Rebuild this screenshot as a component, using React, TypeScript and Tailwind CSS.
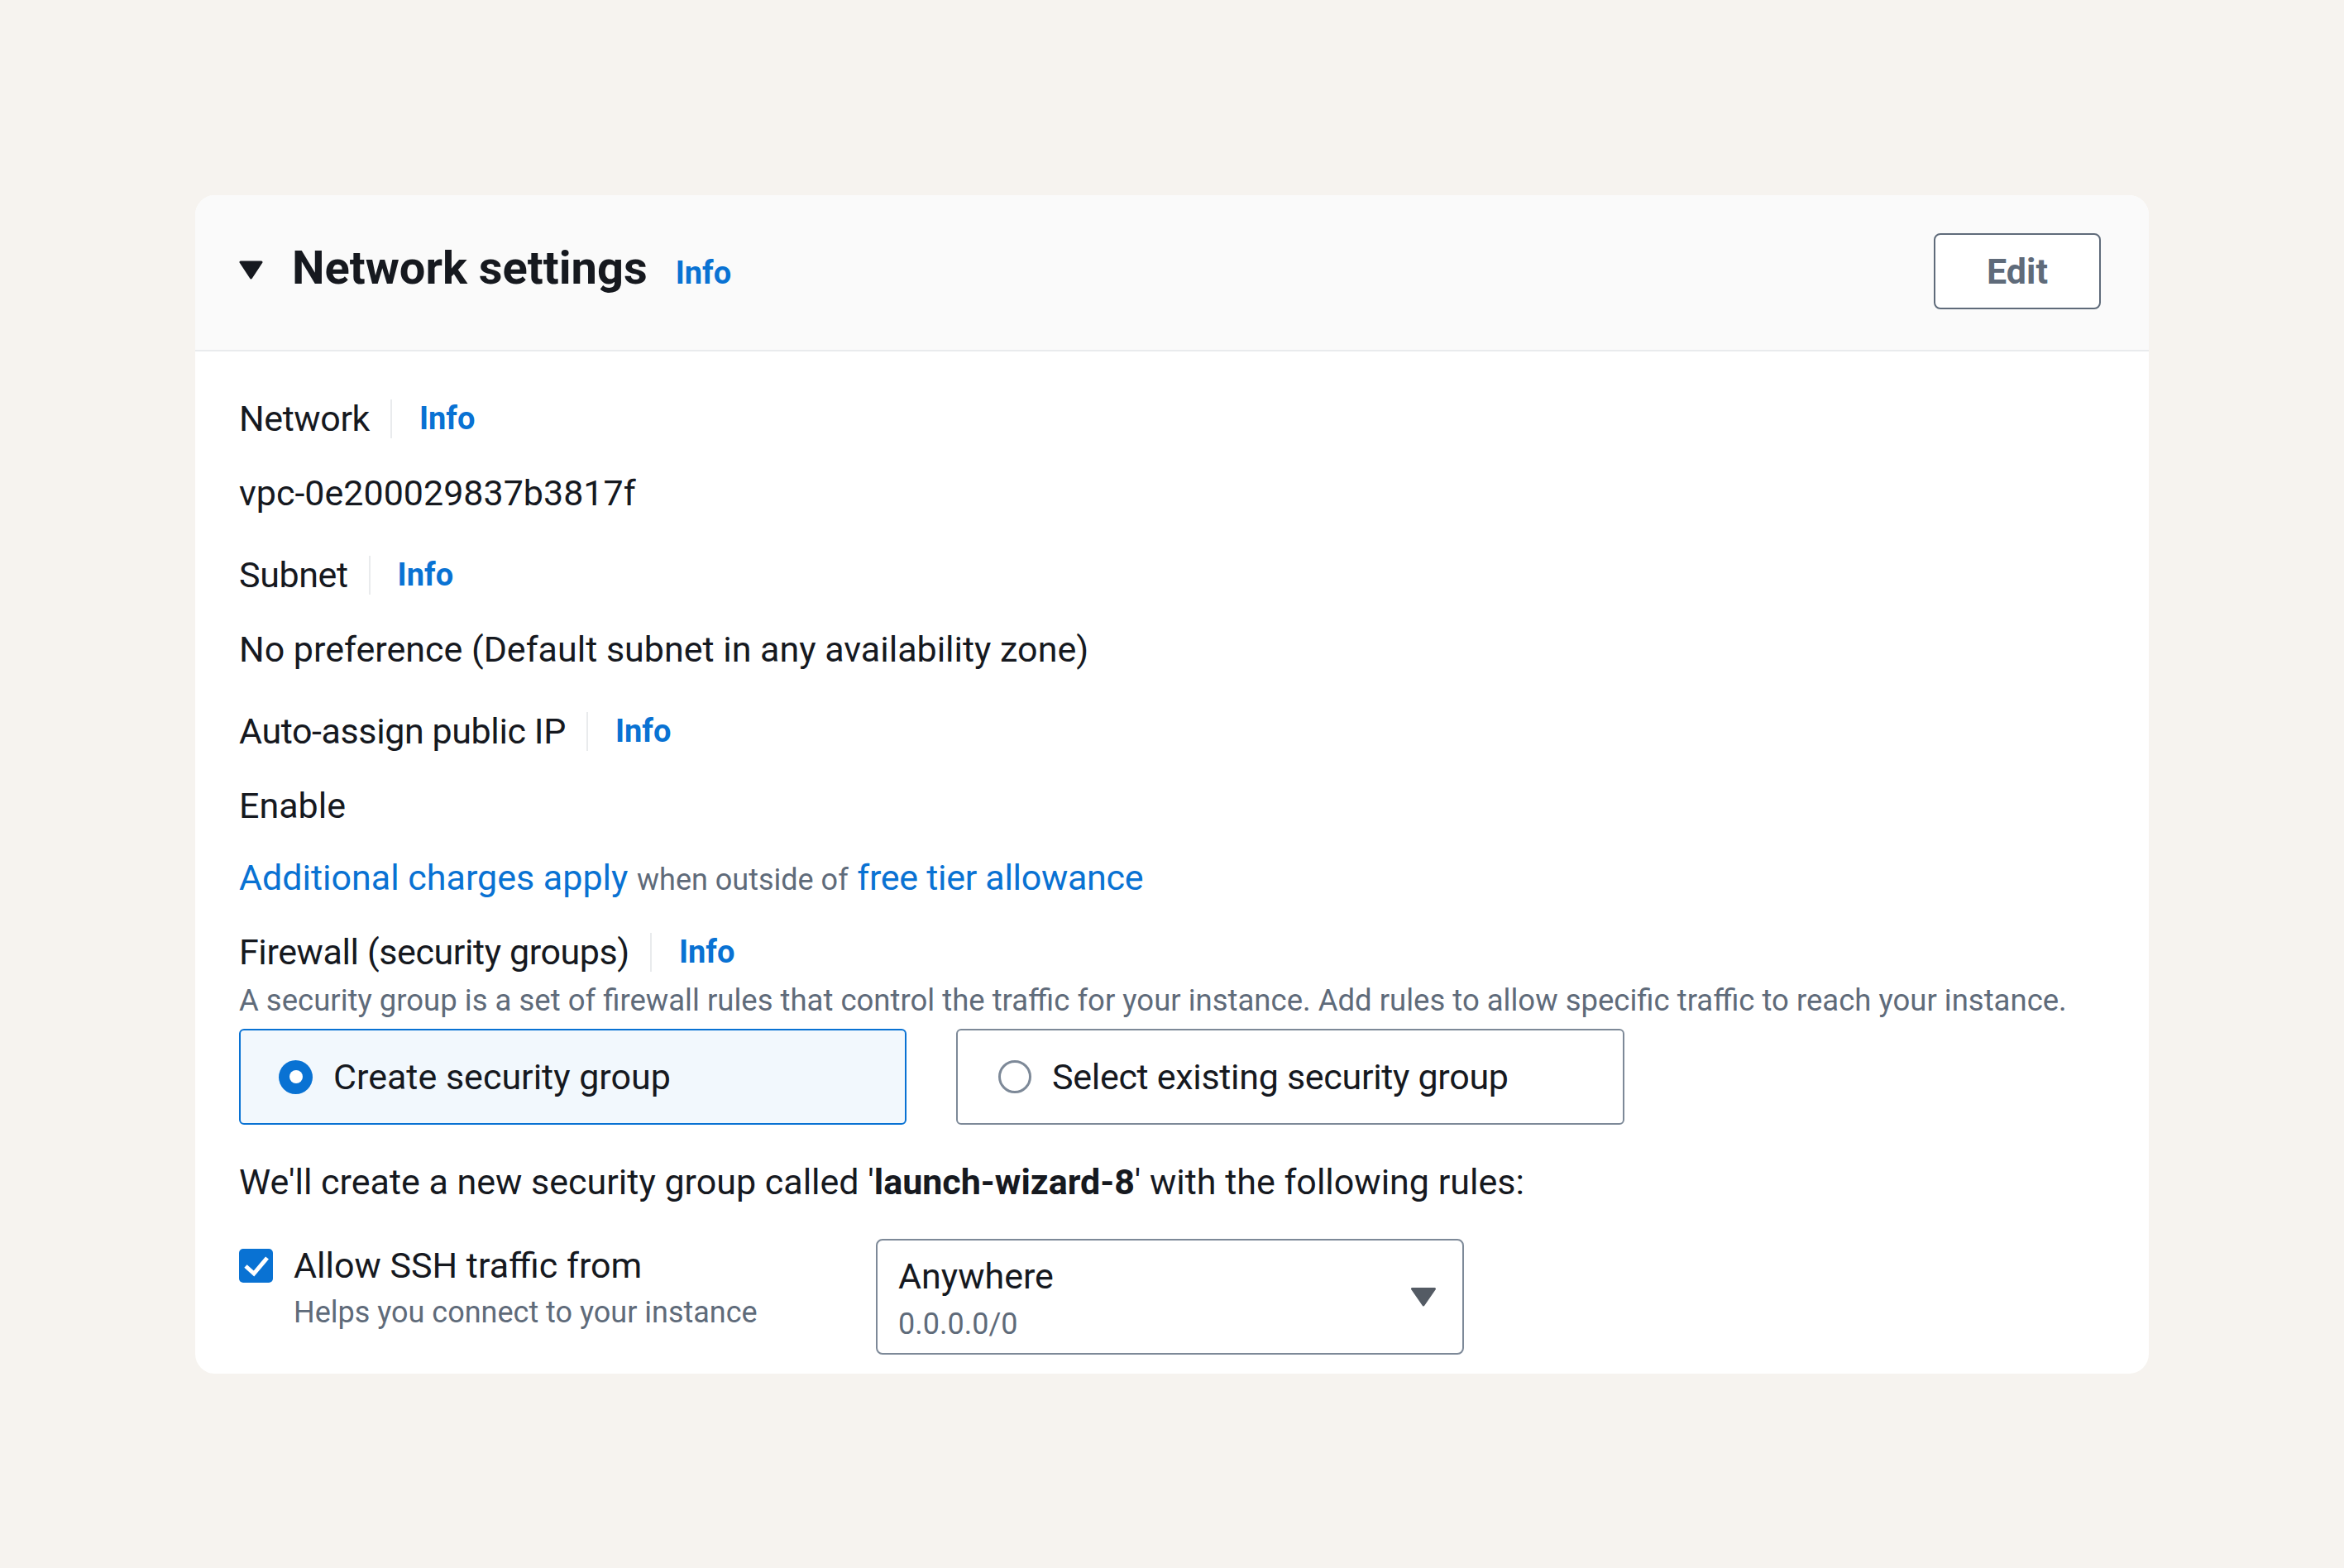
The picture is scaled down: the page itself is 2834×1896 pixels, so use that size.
import React from 'react';

function Info({ className = '' }: { className?: string }) {
  return <span className={`text-[38px] font-bold text-[#0972d3] ${className}`}>Info</span>;
}

function LabelRow({ label, className = '' }: { label: string; className?: string }) {
  return (
    <div className={`flex h-[47px] items-stretch ${className}`}>
      <span className="text-[43px] leading-[47px] tracking-[-0.4px] pr-[25px] border-r-2 border-[#e9ebed]">{label}</span>
      <Info className="pl-[33px] leading-[47px]" />
    </div>
  );
}

function Value({ children, className = '' }: { children: React.ReactNode; className?: string }) {
  return <div className={`h-[47px] text-[43px] leading-[47px] whitespace-nowrap ${className}`}>{children}</div>;
}

export default function App() {
  return (
    <div className="w-[2834px] h-[1896px] bg-[#f6f3ef] pl-[236px] pt-[236px] font-['Roboto',sans-serif] text-[#16191f]">
      <div className="w-[2362px] bg-white rounded-[24px] overflow-hidden">
        {/* header */}
        <div className="h-[189px] bg-[#fafafa] border-b-2 border-[#e9ebed] pl-[53px] pr-[58px] flex items-start justify-between">
          <div className="mt-[60px] h-[60px] flex items-center">
            <svg width="29" height="23" viewBox="0 0 29 23" className="mr-[35px]">
              <path d="M2 2 H27 L14.5 21 Z" fill="#16191f" stroke="#16191f" strokeWidth="3" strokeLinejoin="round" />
            </svg>
            <div className="flex items-baseline">
              <h2 className="text-[56px] leading-[60px] font-bold">Network settings</h2>
              <Info className="ml-[34px]" />
            </div>
          </div>
          <button className="mt-[46px] w-[202px] h-[92px] bg-white border-2 border-[#5f6b7a] rounded-[8px] text-[43px] font-bold text-[#5f6b7a]">
            Edit
          </button>
        </div>

        {/* body */}
        <div className="pl-[53px] pr-[58px] pt-[58px] pb-[23px]">
          <LabelRow label="Network" />
          <Value className="mt-[43px]">vpc-0e200029837b3817f</Value>
          <LabelRow label="Subnet" className="mt-[52px]" />
          <Value className="mt-[43px]">No preference (Default subnet in any availability zone)</Value>
          <LabelRow label="Auto-assign public IP" className="mt-[52px]" />
          <Value className="mt-[43px]">Enable</Value>
          <Value className="mt-[40px]">
            <span className="text-[#0972d3]">Additional charges apply</span>{' '}
            <span className="text-[36px] text-[#5f6b7a]">when outside of</span>{' '}
            <span className="text-[#0972d3] tracking-[-0.3px]">free tier allowance</span>
          </Value>
          <LabelRow label="Firewall (security groups)" className="mt-[43px]" />
          <p className="mt-[13px] text-[36.5px] leading-[44px] text-[#5f6b7a] whitespace-nowrap">
            A security group is a set of firewall rules that control the traffic for your instance. Add rules to allow specific traffic to reach your instance.
          </p>

          <div className="mt-[12px] flex gap-[60px]">
            <div className="w-[807px] h-[116px] border-2 border-[#0972d3] bg-[#f2f8fd] rounded-[6px] pl-[46px] flex items-center gap-[25px]">
              <div className="w-[41px] h-[41px] rounded-full bg-[#0972d3] flex items-center justify-center">
                <div className="w-[16px] h-[16px] rounded-full bg-white" />
              </div>
              <span className="text-[43px] leading-[47px]">Create security group</span>
            </div>
            <div className="w-[808px] h-[116px] border-2 border-[#7d8998] bg-white rounded-[6px] pl-[49px] flex items-center gap-[25px]">
              <div className="w-[40px] h-[40px] rounded-full border-[3px] border-[#7d8998] bg-white" />
              <span className="text-[43px] leading-[47px] tracking-[-0.3px]">Select existing security group</span>
            </div>
          </div>

          <Value className="mt-[46px]">
            We'll create a new security group called '<span className="font-bold">launch-wizard-8</span>' with the following rules:
          </Value>

          <div className="mt-[45px] flex items-start">
            <div className="w-[770px] flex items-start">
              <div className="mt-[12px] w-[41px] h-[41px] rounded-[5px] bg-[#0972d3] flex items-center justify-center">
                <svg width="41" height="41" viewBox="0 0 41 41">
                  <polyline points="8,21 18,30 34,11" fill="none" stroke="white" strokeWidth="5" strokeLinejoin="miter" />
                </svg>
              </div>
              <div className="ml-[25px] mt-[9px]">
                <div className="text-[43px] leading-[47px]">Allow SSH traffic from</div>
                <div className="mt-[11px] text-[36px] leading-[44px] text-[#5f6b7a]">Helps you connect to your instance</div>
              </div>
            </div>
            <div className="w-[711px] h-[140px] border-2 border-[#7d8998] rounded-[8px] bg-white pl-[25px] pr-[31px] flex items-start justify-between">
              <div className="pt-[20px]">
                <div className="text-[43px] leading-[47px]">Anywhere</div>
                <div className="mt-[12px] text-[36px] leading-[44px] text-[#5f6b7a]">0.0.0.0/0</div>
              </div>
              <svg width="32" height="24" viewBox="0 0 32 24" className="self-center">
                <path d="M2.5 2.5 H29.5 L16 22 Z" fill="#545b64" stroke="#545b64" strokeWidth="3" strokeLinejoin="round" />
              </svg>
            </div>
          </div>
        </div>
      </div>
    </div>
  );
}
